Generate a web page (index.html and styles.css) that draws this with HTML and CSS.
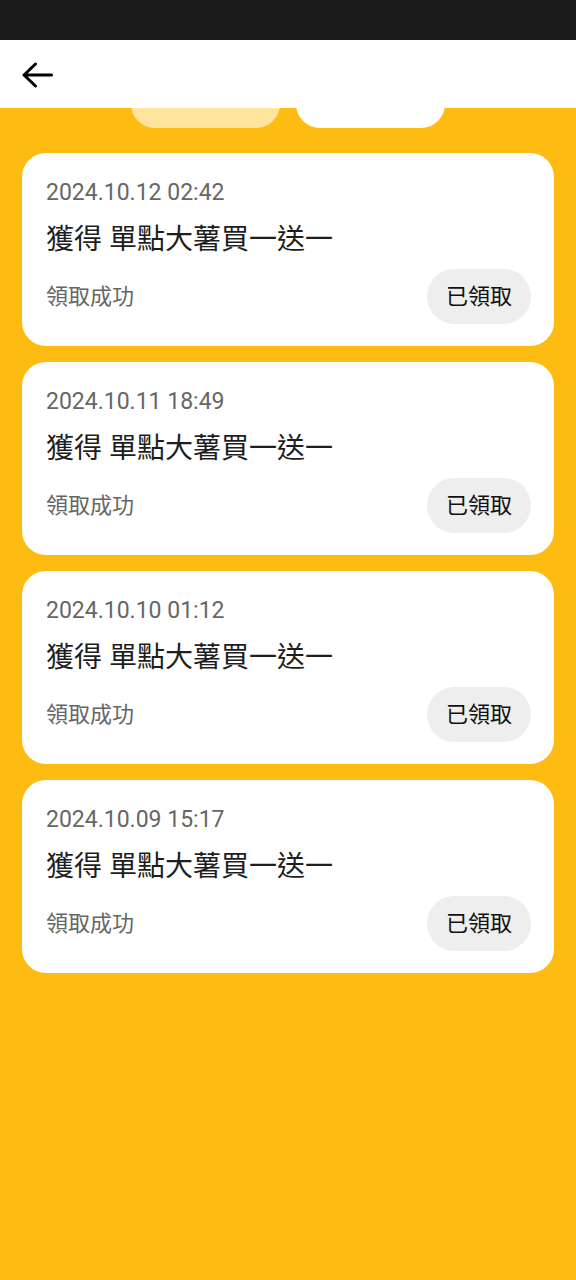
FILE: index.html
```html
<!DOCTYPE html>
<html lang="zh-Hant">
<head>
    <meta charset="UTF-8">
    <meta name="viewport" content="width=device-width, initial-scale=1.0">
    <title>領取紀錄</title>
    <link rel="stylesheet" href="styles.css">
</head>
<body>
    <div class="wrapper">
        <div class="statusbar"></div>
        <header>
            <!-- 뒤로가기 -->
            <a href="" class="back">
                <svg width="31" height="26" viewBox="0 0 31 26">
                    <path d="M29.5 13H3M13.5 2L2 13L13.5 24" fill="none" stroke="#000" stroke-width="3" stroke-linecap="round" stroke-linejoin="round"/>
                </svg>
            </a>
        </header>
        <main>
            <nav class="tabs">
                <span class="tab active"></span>
                <span class="tab"></span>
            </nav>
            <ul class="list">
                <li class="card">
                    <p class="date">2024.10.12 02:42</p>
                    <p class="title">獲得 單點大薯買一送一</p>
                    <div class="row">
                        <span class="status">領取成功</span>
                        <button class="btn">已領取</button>
                    </div>
                </li>
                <li class="card">
                    <p class="date">2024.10.11 18:49</p>
                    <p class="title">獲得 單點大薯買一送一</p>
                    <div class="row">
                        <span class="status">領取成功</span>
                        <button class="btn">已領取</button>
                    </div>
                </li>
                <li class="card">
                    <p class="date">2024.10.10 01:12</p>
                    <p class="title">獲得 單點大薯買一送一</p>
                    <div class="row">
                        <span class="status">領取成功</span>
                        <button class="btn">已領取</button>
                    </div>
                </li>
                <li class="card">
                    <p class="date">2024.10.09 15:17</p>
                    <p class="title">獲得 單點大薯買一送一</p>
                    <div class="row">
                        <span class="status">領取成功</span>
                        <button class="btn">已領取</button>
                    </div>
                </li>
            </ul>
        </main>
    </div>
</body>
</html>
```

FILE: styles.css
```css
*{box-sizing: border-box;}
ul{list-style: none; margin: 0; padding: 0;}
p{margin: 0;}
a{text-decoration: none; color: #000;}
body{
    margin: 0;
    font-family: Roboto, "Noto Sans CJK TC", sans-serif;
    background-color: #febb12;
}
.wrapper{
    min-height: 100vh;
    background-color: #febb12;
}
.wrapper>.statusbar{
    height: 40px;
    background-color: #1c1c1c;
}
.wrapper>header{
    height: 68px;
    background-color: #fff;
    display: flex;
    align-items: center;
    padding-left: 22px;
    position: relative;
    z-index: 1;
}
.wrapper>header>.back{
    display: flex;
    margin-top: 1px;
}

/* 헤더 밑으로 들어간 탭 */
.wrapper>main>.tabs{
    display: flex;
    justify-content: center;
    gap: 16px;
    margin-top: -28px;
}
.wrapper>main>.tabs>.tab{
    width: 149px;
    height: 48px;
    border-radius: 24px;
    background-color: #fff;
}
.wrapper>main>.tabs>.tab.active{
    background-color: #ffe49d;
}

.wrapper>main>.list{
    display: flex;
    flex-direction: column;
    gap: 16px;
    padding: 25px 22px;
}
.wrapper>main>.list>.card{
    background-color: #fff;
    border-radius: 24px;
    padding: 25px 23px 22px 24px;
    height: 193px;
}
.card>.date{
    font-size: 23px;
    line-height: 30px;
    color: #666;
}
.card>.title{
    font-size: 28px;
    line-height: 36px;
    color: #1e1e1e;
    margin-top: 14px;
}
.card>.row{
    display: flex;
    justify-content: space-between;
    align-items: center;
    margin-top: 11px;
}
.card>.row>.status{
    font-size: 22px;
    color: #666;
    padding-bottom: 6px;
}
.card>.row>.btn{
    width: 104px;
    height: 55px;
    border: 0;
    border-radius: 28px;
    background-color: #eee;
    font-family: Roboto, "Noto Sans CJK TC", sans-serif;
    font-size: 22px;
    color: #111;
    padding: 0 0 5px;
}
```
